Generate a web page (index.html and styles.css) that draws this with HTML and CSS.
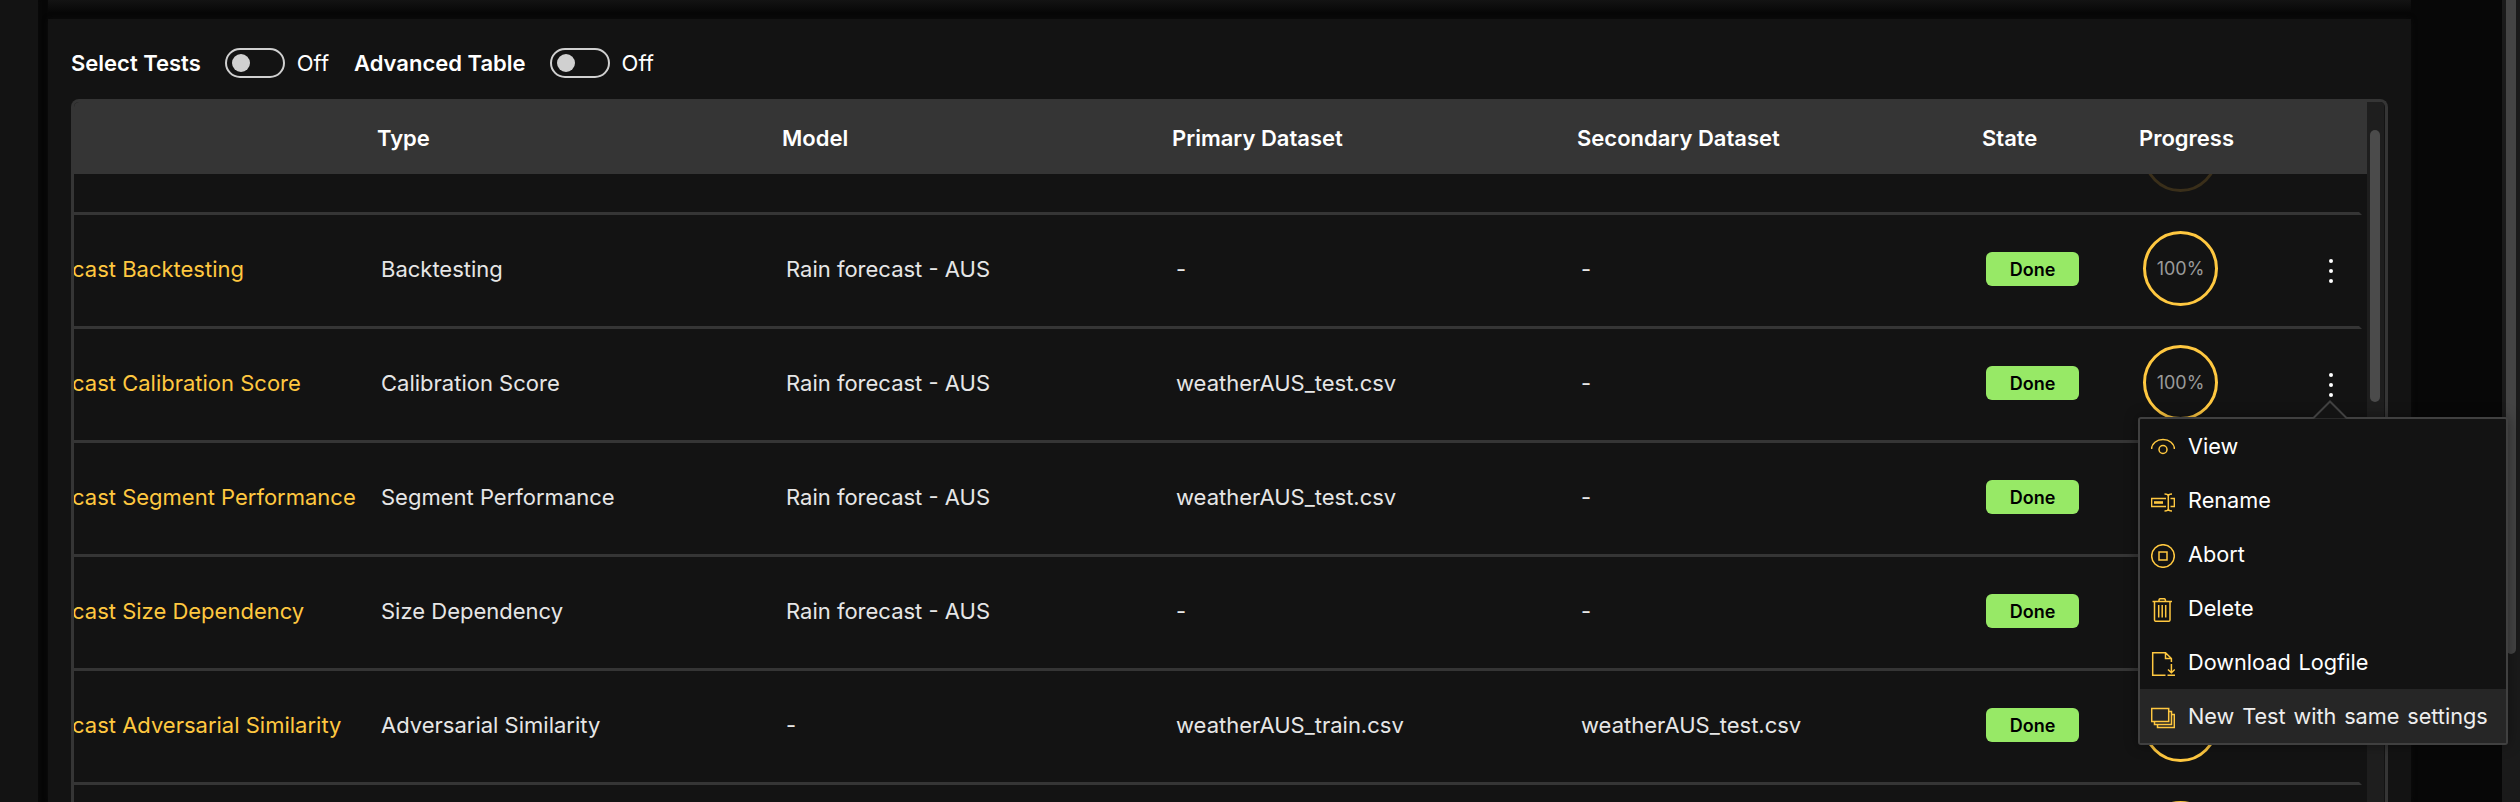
FILE: index.html
```html
<!DOCTYPE html>
<html lang="en">
<head>
    <meta charset="utf-8">
    <title>Test Results</title>
    <link rel="stylesheet" href="styles.css">
</head>
<body>
    <div class="page">
        <div class="side"></div>
        <main class="main">
            <div class="panel-above"></div>
            <section class="panel">
                <div class="toolbar">
                    <span class="toolbar-label">Select Tests</span>
                    <span class="toggle"></span>
                    <span class="toggle-state">Off</span>
                    <span class="toolbar-label">Advanced Table</span>
                    <span class="toggle"></span>
                    <span class="toggle-state">Off</span>
                </div>
                <div class="table">
                    <div class="table-content">
                        <div class="header">
                            <div></div>
                            <div>Type</div>
                            <div>Model</div>
                            <div>Primary Dataset</div>
                            <div>Secondary Dataset</div>
                            <div>State</div>
                            <div>Progress</div>
                        </div>
                        <div class="rows">
                            <div class="row">
                                <div></div><div></div><div></div><div></div><div></div><div></div>
                                <div><span class="circle dim"></span></div>
                            </div>
                            <div class="row">
                                <div class="name">cast Backtesting</div>
                                <div>Backtesting</div>
                                <div>Rain forecast - AUS</div>
                                <div>-</div>
                                <div>-</div>
                                <div><span class="badge">Done</span></div>
                                <div><span class="circle">100%</span></div>
                                <div class="dots"><i></i><i></i><i></i></div>
                            </div>
                            <div class="row">
                                <div class="name">cast Calibration Score</div>
                                <div>Calibration Score</div>
                                <div>Rain forecast - AUS</div>
                                <div>weatherAUS_test.csv</div>
                                <div>-</div>
                                <div><span class="badge">Done</span></div>
                                <div><span class="circle">100%</span></div>
                                <div class="dots"><i></i><i></i><i></i></div>
                            </div>
                            <div class="row">
                                <div class="name">cast Segment Performance</div>
                                <div>Segment Performance</div>
                                <div>Rain forecast - AUS</div>
                                <div>weatherAUS_test.csv</div>
                                <div>-</div>
                                <div><span class="badge">Done</span></div>
                                <div><span class="circle"></span></div>
                            </div>
                            <div class="row">
                                <div class="name">cast Size Dependency</div>
                                <div>Size Dependency</div>
                                <div>Rain forecast - AUS</div>
                                <div>-</div>
                                <div>-</div>
                                <div><span class="badge">Done</span></div>
                                <div><span class="circle"></span></div>
                            </div>
                            <div class="row">
                                <div class="name">cast Adversarial Similarity</div>
                                <div>Adversarial Similarity</div>
                                <div>-</div>
                                <div>weatherAUS_train.csv</div>
                                <div>weatherAUS_test.csv</div>
                                <div><span class="badge">Done</span></div>
                                <div><span class="circle"></span></div>
                            </div>
                            <div class="row">
                                <div></div><div></div><div></div><div></div><div></div><div></div>
                                <div><span class="circle"></span></div>
                            </div>
                        </div>
                    </div>
                    <div class="table-scroll"><div class="table-thumb"></div></div>
                </div>
            </section>
        </main>
        <div class="page-scroll"><div class="page-thumb"></div></div>
    </div>

    <div class="menu">
        <svg class="menu-arrow" viewBox="0 0 36 19"><path d="M1 18.5L18 1.5L35 18.5"/></svg>
        <div class="menu-item">
            <svg viewBox="0 0 24 24"><path d="M.6 13C.6 7.500 5.700 3.600 12 3.600S23.400 7.500 23.400 13"/><circle cx="12" cy="13.500" r="4"/></svg>
            View
        </div>
        <div class="menu-item">
            <svg viewBox="0 0 24 24"><path d="M15 8.500H.6V16.500H15M19.500 8.500H23.400V16.500H19.500M13.500 4Q17.300 4 17.300 6V19Q17.300 21 13.500 21M21 4Q17.300 4 17.300 6M17.300 19Q17.300 21 21 21"/><path class="thick" d="M3 12.500H12"/></svg>
            Rename
        </div>
        <div class="menu-item">
            <svg viewBox="0 0 24 24"><circle cx="12" cy="12" r="11.300"/><path d="M8 8H16V16H8Z"/></svg>
            Abort
        </div>
        <div class="menu-item">
            <svg viewBox="0 0 24 24"><path d="M1.500 3.500H21M8 3.500V2Q8 .7 9.400 .7H13Q14.400 .7 14.400 2V3.500M3.500 3.500V22Q3.500 23.300 5 23.300H17.500Q19 23.300 19 22V3.500M7.700 7V19.500M11.200 7V19.500M14.700 7V19.500"/></svg>
            Delete
        </div>
        <div class="menu-item">
            <svg viewBox="0 0 24 24"><path d="M14.500 23.300H1.700V.7H14.500L20.400 6.500V10M14.500 .7V6.500H20.400M20.400 12V20.500M17 17.500L20.400 20.800L23.800 17.500M16.500 23.300H24"/></svg>
            Download Logfile
        </div>
        <div class="menu-item active">
            <svg viewBox="0 0 24 24"><path d="M.7 2.600H17.700V15.400H.7ZM17.700 5.600H20.500V18.400H3.500V15.400M20.500 8.600H23.300V21.400H6.500V18.400"/></svg>
            New Test with same settings
        </div>
    </div>
</body>
</html>
```
FILE: styles.css
```css
* {
    box-sizing: border-box;
}

body {
    margin: 0;
    background-color: #070707;
    color: #fff;
    font-family: Inter, sans-serif;
    font-size: 22px;
    overflow: hidden;
}

.page {
    display: flex;
    height: 802px;
}

.side {
    width: 38px;
    background-color: #131313;
    box-shadow: 0 0 6px #0c0c0c;
}

.main {
    flex: 1;
    padding: 0 91px 0 10px;
}

.panel-above {
    height: 19px;
    background: linear-gradient(#131313, #070707 12px);
}

.panel {
    height: 783px;
    padding: 28px 23px 0;
    background-color: #131313;
    box-shadow: 0 0 5px #0c0c0c;
}

.toolbar {
    display: flex;
    align-items: center;
    height: 32px;
    margin-bottom: 20px;
}

.toolbar-label {
    font-weight: 600;
}

.toggle {
    width: 60px;
    height: 30px;
    margin: 0 12px 0 24px;
    padding: 4px 5px;
    border: 2px solid #d0d0d0;
    border-radius: 15px;
}

.toggle::before {
    content: "";
    display: block;
    width: 18px;
    height: 18px;
    border-radius: 50%;
    background-color: #d0d0d0;
}

.toggle-state {
    margin-right: 25px;
}

.table {
    display: flex;
    width: 2317px;
    height: 703px;
    border: 3px solid #353535;
    border-bottom: none;
    border-radius: 8px 8px 0 0;
    overflow: hidden;
}

.table-content {
    width: 2293px;
}

.header,
.row {
    display: grid;
    grid-template-columns: 303px 405px 390px 405px 405px 157px 174px 1fr;
    align-items: center;
}

.header {
    position: relative;
    z-index: 1;
    height: 72px;
    background-color: #353535;
    font-weight: 600;
}

.rows {
    width: 2288px;
    margin-top: -73px;
}

.row {
    height: 114px;
    padding-bottom: 4px;
    border-bottom: 3px solid #353535;
    border-right: 3px solid transparent;
    color: #e6e6e6;
}

.row > div {
    padding-left: 4px;
    white-space: nowrap;
}

.row > .name {
    padding-left: 0;
    margin-left: -2px;
    color: #ffc840;
}

.badge {
    display: block;
    width: 93px;
    height: 34px;
    border-radius: 6px;
    background-color: #97e966;
    color: #000;
    font-size: 18px;
    font-weight: 600;
    line-height: 35px;
    text-align: center;
}

.circle {
    display: block;
    width: 75px;
    height: 75px;
    border: 3px solid #ffc840;
    border-radius: 50%;
    color: #9a9a9a;
    font-size: 18px;
    line-height: 69px;
    text-align: center;
}

.dim {
    border-color: #3a2f1a;
}

.row > .dots {
    display: flex;
    flex-direction: column;
    gap: 6px;
    padding: 4px 0 0 16px;
}

.dots i {
    width: 4px;
    height: 4px;
    border-radius: 50%;
    background-color: #fff;
}

.table-scroll {
    width: 17px;
    padding: 28px 3px 0;
    background-color: #1e1e1e;
}

.table-thumb {
    width: 10px;
    height: 272px;
    border-radius: 5px;
    background-color: #4b4b4b;
}

.page-scroll {
    width: 18px;
    padding-left: 4px;
    background-color: #1a1a1a;
}

.page-thumb {
    width: 10px;
    height: 654px;
    border-radius: 0 0 5px 5px;
    background-color: #444;
}

.menu {
    position: absolute;
    left: 2138px;
    top: 417px;
    width: 370px;
    height: 328px;
    border: 2px solid #404040;
    border-radius: 3px;
    background-color: #131313;
    box-shadow: 0 0 14px rgba(0, 0, 0, 0.4);
}

.menu-arrow {
    position: absolute;
    left: 172px;
    top: -19px;
    width: 36px;
    height: 19px;
    fill: #131313;
    stroke: #404040;
    stroke-width: 2;
}

.menu-item {
    display: flex;
    align-items: center;
    gap: 13px;
    height: 54px;
    padding-left: 11px;
    font-size: 21.7px;
    word-spacing: 1.7px;
}

.menu-item svg {
    width: 24px;
    height: 24px;
    margin-top: 4px;
    fill: none;
    stroke: #ffc840;
    stroke-width: 1.5;
}

.menu-item .thick {
    stroke-width: 2.6;
}

.active {
    background-color: #262626;
    color: #eee;
}
```
